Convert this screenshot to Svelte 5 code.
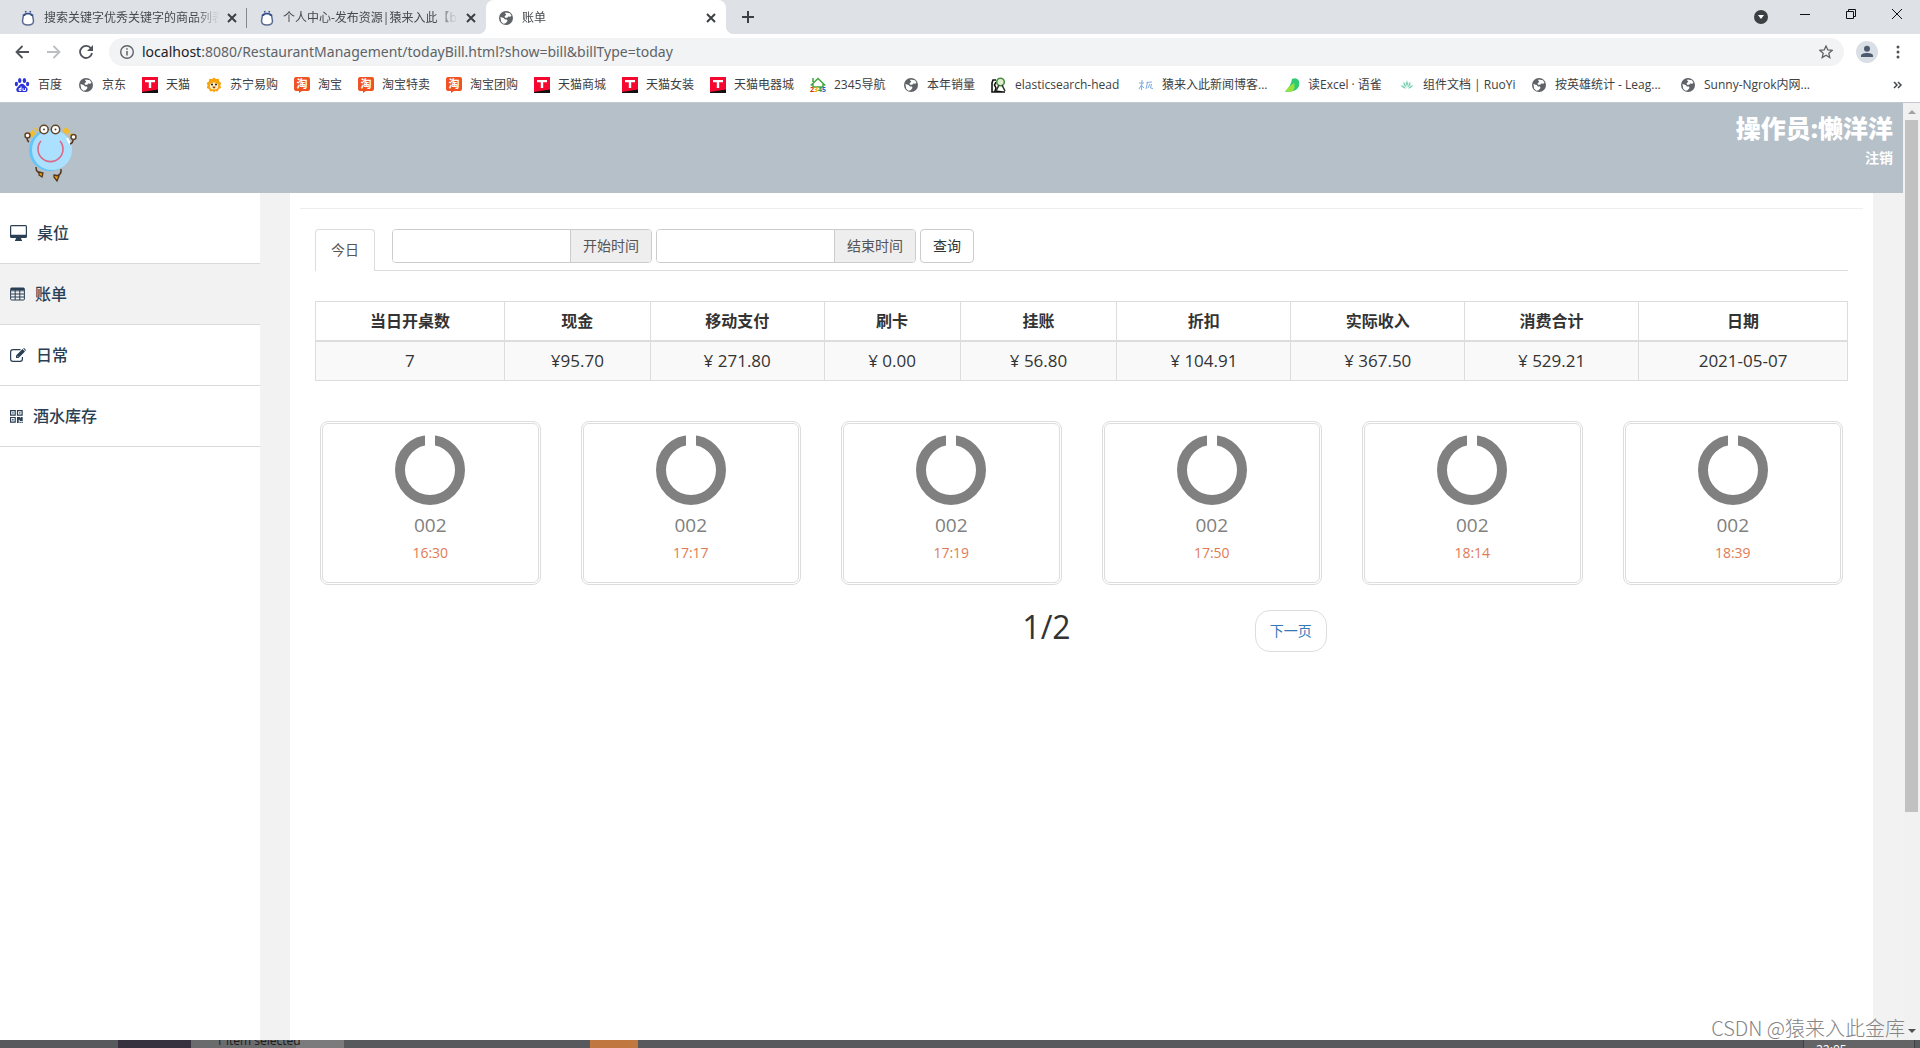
<script lang="ts">
  type Tab = { title: string; icon: string; active?: boolean }
  type Bookmark = { label: string; icon: string; width: number }

  const tabs: Tab[] = [
    { title: '搜索关键字优秀关键字的商品列表', icon: 'penguin' },
    { title: '个人中心-发布资源|猿来入此【bo', icon: 'penguin' },
    { title: '账单', icon: 'globe', active: true },
  ]

  const bookmarks: Bookmark[] = [
    { label: '百度', icon: 'baidu', width: 24 },
    { label: '京东', icon: 'globe', width: 24 },
    { label: '天猫', icon: 'tmall', width: 24 },
    { label: '苏宁易购', icon: 'lion', width: 48 },
    { label: '淘宝', icon: 'taobao', width: 24 },
    { label: '淘宝特卖', icon: 'taobao', width: 48 },
    { label: '淘宝团购', icon: 'taobao', width: 48 },
    { label: '天猫商城', icon: 'tmall', width: 48 },
    { label: '天猫女装', icon: 'tmall', width: 48 },
    { label: '天猫电器城', icon: 'tmall', width: 60 },
    { label: '2345导航', icon: 'house', width: 53 },
    { label: '本年销量', icon: 'globe', width: 48 },
    { label: 'elasticsearch-head', icon: 'elastic', width: 107 },
    { label: '猿来入此新闻博客...', icon: 'blog', width: 106 },
    { label: '读Excel · 语雀', icon: 'leaf', width: 75 },
    { label: '组件文档 | RuoYi', icon: 'lotus', width: 92 },
    { label: '按英雄统计 - Leag...', icon: 'globe', width: 109 },
    { label: 'Sunny-Ngrok内网...', icon: 'globe', width: 112 },
  ]

  const menu = [
    { label: '桌位', icon: 'desktop' },
    { label: '账单', icon: 'table' },
    { label: '日常', icon: 'edit' },
    { label: '酒水库存', icon: 'qrcode' },
  ]

  const columns = [
    { name: '当日开桌数', value: '7', size: 189 },
    { name: '现金', value: '¥95.70', size: 146 },
    { name: '移动支付', value: '¥ 271.80', size: 174 },
    { name: '刷卡', value: '¥ 0.00', size: 136 },
    { name: '挂账', value: '¥ 56.80', size: 157 },
    { name: '折扣', value: '¥ 104.91', size: 174 },
    { name: '实际收入', value: '¥ 367.50', size: 174 },
    { name: '消费合计', value: '¥ 529.21', size: 174 },
    { name: '日期', value: '2021-05-07', size: 209 },
  ]
  const total = columns.reduce((sum, column) => sum + column.size, 0)

  const bills = ['16:30', '17:17', '17:19', '17:50', '18:14', '18:39']

  let current = $state('账单')
  let start = $state('')
  let end = $state('')
</script>

{#snippet favicon(name: string)}
  <svg class="favicon" viewBox="0 0 16 16" aria-hidden="true">
    {#if name === 'globe'}
      <circle cx="8" cy="8" r="7" fill="#5f6368" />
      <path d="M7.500 2.600 12 3.300l1.500 2.400-1.300 1.100-2-.3-.9 1.200-2.200.1-.6-1.400 1-1 .8-1.200-1.200-.4zM2.400 7l3.300.9 1.300 1.500 1.900.2.600 1.300-1.900 2.400-2.100.5-2.300-2.100z" fill="#fff" />
    {:else if name === 'penguin'}
      <path d="M3.500 5h9l1 6q0 4-5.500 4t-5.500-4z" fill="#fff" stroke="#5c6b91" stroke-width="1.500" />
      <path d="M2.800 6C3 1.500 13 1.500 13.200 6z" fill="#34508c" />
      <path d="M6 2.500 5.500 1M10 2.500 10.500 1" stroke="#34508c" stroke-width="1.500" />
      <rect x="5" y="4.500" width="6" height="4" rx="2" fill="#fff" />
    {:else if name === 'baidu'}
      <g fill="#2b32dd">
        <ellipse cx="5.700" cy="3.500" rx="1.700" ry="2.500" />
        <ellipse cx="10.400" cy="3.400" rx="1.700" ry="2.500" />
        <ellipse cx="2.400" cy="7" rx="1.600" ry="2.200" />
        <ellipse cx="13.600" cy="7" rx="1.600" ry="2.200" />
        <path d="M8 6.700c2 0 2.800 2 4.500 3.600 2.400 2.400.6 5-1.500 4.800-2.500-.3-3.500-.3-6 0-2.200.2-3.900-2.400-1.500-4.800C5.200 8.700 6 6.700 8 6.700z" />
      </g>
      <path d="M7 9.500v4H5.200v-2H7M9 11.200v2.300h2.500v-2.300" fill="none" stroke="#fff" />
    {:else if name === 'tmall'}
      <path d="M0 0h16v16H0z" fill="#111" />
      <path d="M0 0h16v12.500L0 15z" fill="#f4082f" />
      <path d="M3 3h10v2.200H9.200V11H6.800V5.200H3z" fill="#fff" />
    {:else if name === 'lion'}
      <path d="M8 .5 10 2l2.700-.2.5 2.600L15.300 6l-1 2.300.8 2.600-2.300 1.100-1.200 2.400-2.400-.5L8 15.500l-1.300-1.600-2.500.5L3 12 .8 10.900l.8-2.600L.7 6l2.200-1.600.4-2.600L6 2z" fill="#f5a40b" />
      <ellipse cx="8" cy="9" rx="4.200" ry="3.500" fill="#fff0c3" />
      <circle cx="6" cy="7.500" r=".9" /><circle cx="10" cy="7.500" r=".9" />
      <path d="M6.500 9.500h3Q9.500 11.500 8 11.500T6.500 9.500z" fill="#a33b12" />
    {:else if name === 'taobao'}
      <path d="M2 0h12q2 0 2 2v10q0 2-2 2H8l-3 2v-2H2q-2 0-2-2V2q0-2 2-2z" fill="#ef5223" />
      <text x="8" y="11" text-anchor="middle" font-size="11" font-weight="700" fill="#fff">淘</text>
    {:else if name === 'house'}
      <path d="M.7 8.500 8 1.500l7.300 7M3 1v4M3 7v3h10V7" fill="none" stroke="#43a53d" stroke-width="1.500" />
      <text x="8" y="15" text-anchor="middle" font-size="7" font-weight="700"><tspan fill="#d52e27">2</tspan><tspan fill="#e5a500">3</tspan><tspan fill="#2b9b3c">4</tspan><tspan fill="#2464c8">5</tspan></text>
    {:else if name === 'elastic'}
      <path d="M5 3H2l-1 3v9h13M5 5 3.500 8 5 11l-1 3 8 1" fill="none" stroke="#111" stroke-width="1.600" />
      <circle cx="9.500" cy="5" r="3.800" fill="#dceecf" stroke="#4f8a45" stroke-width="1.600" />
      <path d="m8 8-3 6m6-6 3 6" stroke="#273d22" stroke-width="1.600" />
    {:else if name === 'blog'}
      <path d="M1 6h5M4 3 3.500 13M3.500 8 1 12M4 9l2 2M8.500 5.500 14 5M9.500 5.500 8 12M12 7l-2 4M13.500 7l-1 4 2.500.5" fill="none" stroke="#7dacdd" />
    {:else if name === 'leaf'}
      <path d="M8 2q5-2 7 2 1 5-2 8-4 3.500-12 2.500Q7 9 8 2z" fill="#2ecb71" />
      <path d="M1 14.500Q5 9 10 6q2 5-2 8.500z" fill="#9be13d" />
    {:else if name === 'lotus'}
      <path d="M8 12Q5 7 8 3q3 4 0 9Q4 10 4 4.500q4 2 4 7.500Q4 12 1 8q5 0 7 4 2-4 7-4-3 4-7 4 0-5.500 4-7.500 0 5.500-4 7.500z" fill="#65c9a8" stroke="#fff" stroke-width=".6" />
    {/if}
  </svg>
{/snippet}

{#snippet menuIcon(name: string)}
  {#if name === 'desktop'}
    <svg width="17" height="16" viewBox="0 0 17 16" aria-hidden="true">
      <path fill-rule="evenodd" d="M1.500 0h14Q17 0 17 1.500v10q0 1.500-1.500 1.500H11l.5 1.700.5.300v1H5v-1l.5-.3L6 13H1.500Q0 13 0 11.500v-10Q0 0 1.500 0zM1.200 1.200v8.600h14.600V1.200z" fill="currentColor" />
    </svg>
  {:else if name === 'table'}
    <svg width="15" height="14" viewBox="0 0 15 14" aria-hidden="true">
      <path d="M.6 2.500V12q0 1 1 1h11.800q1 0 1-1V2q0-1-1-1H1.600q-1 0-1 1zM1 3.800h13M1 7h13M1 10h13M5.200 3v10M9.800 3v10" fill="none" stroke="currentColor" />
      <path d="M1 1h13v2H1z" fill="currentColor" />
    </svg>
  {:else if name === 'edit'}
    <svg width="16" height="14" viewBox="0 0 16 14" aria-hidden="true">
      <path d="M10.500 1.600H3Q.6 1.600.6 4v7Q.6 13.400 3 13.400h7q2.400 0 2.400-2.400V9" fill="none" stroke="currentColor" stroke-width="1.200" />
      <path d="m12.500 1 2.500 2.500-6.500 6.500H6V7.500zM13.200.5l.8-.5 2 2-.6.900z" fill="currentColor" />
      <path d="m7.200 7.800 1 1" stroke="#fff" stroke-width=".8" />
    </svg>
  {:else}
    <svg width="13" height="13" viewBox="0 0 13 13" aria-hidden="true">
      <path d="M.6.6h4.600v4.600H.6zM7.500.6h4.600v4.600H7.500zM.6 7.500h4.600v4.600H.6z" fill="none" stroke="currentColor" stroke-width="1.200" />
      <path d="M2.200 2.200h1.400v1.400H2.200zM9.100 2.200h1.400v1.400H9.100zM2.200 9.100h1.400v1.400H2.200zM7 7h3l1 1.300V7h1.700v4h-3V9.700h-1V13H7zM9.500 11.700h1.300V13H9.500zM11.500 11.700h1.300V13h-1.300z" fill="currentColor" />
    </svg>
  {/if}
{/snippet}

<div class="screen">
  <header class="browser">
    <div class="tab-strip">
      {#each tabs as tab}
        <div class="tab" class:active={tab.active}>
          {@render favicon(tab.icon)}
          <span class="tab-title">{tab.title}</span>
          <button class="close" aria-label="关闭标签页">
            <svg width="10" height="10" viewBox="0 0 10 10"><path d="m1 1 8 8M9 1 1 9" /></svg>
          </button>
        </div>
      {/each}
      <button class="new-tab" aria-label="新标签页">
        <svg width="12" height="12" viewBox="0 0 12 12"><path d="M6 0v12M0 6h12" /></svg>
      </button>
      <div class="window-controls">
        <button class="search-tabs" aria-label="搜索标签页">
          <svg width="14" height="14" viewBox="0 0 14 14"><circle cx="7" cy="7" r="7" fill="#3c4043" /><path d="M4 5h6l-3 4z" fill="#fff" /></svg>
        </button>
        <button aria-label="最小化">
          <svg width="10" height="10" viewBox="0 0 10 10"><path d="M0 5.500h10" stroke="#111" /></svg>
        </button>
        <button aria-label="还原">
          <svg width="10" height="10" viewBox="0 0 10 10"><path d="M.5 2.500h7v7h-7zM2.500 2.500v-2h7v7h-2" fill="none" stroke="#111" /></svg>
        </button>
        <button aria-label="关闭">
          <svg width="10" height="10" viewBox="0 0 10 10"><path d="m0 0 10 10M10 0 0 10" stroke="#111" /></svg>
        </button>
      </div>
    </div>

    <div class="toolbar">
      <button aria-label="后退">
        <svg width="14" height="14" viewBox="0 0 14 14"><path d="M14 7H1.500M7.500 1l-6 6 6 6" fill="none" stroke="#50545a" stroke-width="1.800" /></svg>
      </button>
      <button aria-label="前进">
        <svg width="14" height="14" viewBox="0 0 14 14"><path d="M0 7h12.500M6.500 1l6 6-6 6" fill="none" stroke="#bcbec1" stroke-width="1.800" /></svg>
      </button>
      <button aria-label="重新加载">
        <svg width="14" height="14" viewBox="0 0 14 14"><path d="M12 3.500A6 6 0 1 0 13 8" fill="none" stroke="#50545a" stroke-width="1.800" /><path d="M14 0v6H8z" fill="#50545a" /></svg>
      </button>
      <div class="omnibox">
        <svg width="14" height="14" viewBox="0 0 14 14" aria-hidden="true"><circle cx="7" cy="7" r="6.300" fill="none" stroke="#5f6368" stroke-width="1.400" /><path d="M7 6v4.500M7 3.300v1.500" stroke="#5f6368" stroke-width="1.500" /></svg>
        <span class="url"><b>localhost</b>:8080/RestaurantManagement/todayBill.html?show=bill&amp;billType=today</span>
        <button aria-label="收藏">
          <svg width="14" height="14" viewBox="0 0 14 14"><path d="m7 1 1.800 4 4.300.4-3.300 2.900 1 4.300L7 10.300l-3.800 2.300 1-4.300L.9 5.400 5.200 5z" fill="none" stroke="#5f6368" stroke-width="1.300" /></svg>
        </button>
      </div>
      <button class="profile" aria-label="个人资料">
        <svg width="22" height="22" viewBox="0 0 22 22"><circle cx="11" cy="11" r="11" fill="#dadfe6" /><circle cx="11" cy="7.800" r="3" fill="#4d5b6f" /><path d="M5 16v-1.500c0-3.500 12-3.500 12 0V16z" fill="#4d5b6f" /></svg>
      </button>
      <button aria-label="菜单">
        <svg width="4" height="14" viewBox="0 0 4 14" fill="#50545a"><circle cx="2" cy="2" r="1.500" /><circle cx="2" cy="7" r="1.500" /><circle cx="2" cy="12" r="1.500" /></svg>
      </button>
    </div>

    <nav class="bookmarks">
      {#each bookmarks as bookmark}
        <a href="#{bookmark.label}">
          {@render favicon(bookmark.icon)}
          <span style:width="{bookmark.width}px">{bookmark.label}</span>
        </a>
      {/each}
      <button class="more" aria-label="更多书签">
        <svg width="9" height="8" viewBox="0 0 9 8"><path d="m1 1 3 3-3 3M5 1l3 3-3 3" fill="none" stroke="#44484c" stroke-width="1.500" /></svg>
      </button>
    </nav>
  </header>

  <div class="viewport">
    <div class="page">
      <header class="banner">
        <svg class="logo" width="56" height="60" viewBox="0 0 56 60" aria-hidden="true">
          <path d="m8 12 7-7M42 5l7 6" stroke="#f1bd2d" stroke-width="5" stroke-dasharray="6 2" />
          <circle cx="28" cy="26" r="21" fill="#62c5fa" />
          <circle cx="30" cy="26" r="20" fill="#abe1ff" />
          <path d="M19 17a12.500 12.500 0 1 0 19 0" fill="none" stroke="#db6884" stroke-width="1.600" />
          <g fill="#fff" stroke="#634426" stroke-width="1.500">
            <circle cx="22" cy="5.500" r="4.200" /><circle cx="33.500" cy="5.500" r="4.200" />
            <circle cx="5.500" cy="11.500" r="2.500" /><circle cx="51.500" cy="13" r="2.500" />
          </g>
          <circle cx="22" cy="5.500" r="1" fill="#634426" /><circle cx="33.500" cy="5.500" r="1" fill="#634426" />
          <path d="m45 14 3 6" stroke="#fff" stroke-width="2" />
          <path d="M5 14q0 3 2 4M51 16q0 3-3 4M14 43q0 6 5 6M39 45q1 6-5 7" fill="none" stroke="#55361f" stroke-width="1.500" />
          <path d="m17 48 4 1-1 4-3-2zM32 51l5 1-2 5-3-4z" fill="#e6a116" stroke="#55361f" stroke-width="1.300" />
        </svg>
        <div class="operator">
          <strong>操作员:懒洋洋</strong>
          <a href="#logout">注销</a>
        </div>
      </header>

      <div class="body">
        <nav class="sidebar">
          {#each menu as item}
            <a
              href="#{item.icon}"
              class:selected={current === item.label}
              onclick={() => (current = item.label)}
            >
              {@render menuIcon(item.icon)}
              <span>{item.label}</span>
            </a>
          {/each}
        </nav>

        <main>
          <hr />
          <div class="content">
            <div class="filters">
              <a class="today" href="#today">今日</a>
              <form onsubmit={(event) => event.preventDefault()}>
                <div class="group">
                  <input id="start" type="text" bind:value={start} />
                  <label for="start">开始时间</label>
                </div>
                <div class="group">
                  <input id="end" type="text" bind:value={end} />
                  <label for="end">结束时间</label>
                </div>
                <button class="query">查询</button>
              </form>
            </div>

            <table>
              <colgroup>
                {#each columns as column}
                  <col style:width="{(column.size / total) * 100}%" />
                {/each}
              </colgroup>
              <thead>
                <tr>
                  {#each columns as column}
                    <th>{column.name}</th>
                  {/each}
                </tr>
              </thead>
              <tbody>
                <tr>
                  {#each columns as column}
                    <td>{column.value}</td>
                  {/each}
                </tr>
              </tbody>
            </table>
          </div>

          <div class="bills">
            {#each bills as time}
              <a class="bill" href="#bill-{time}">
                <svg width="70" height="70" viewBox="0 0 70 70" aria-hidden="true">
                  <circle cx="35" cy="35" r="30" fill="none" stroke="#808080" stroke-width="10" />
                  <path d="M30 0h10v12H30z" fill="#fff" />
                </svg>
                <span class="number">002</span>
                <span class="time">{time}</span>
              </a>
            {/each}
          </div>

          <div class="pager">
            <span>1/2</span>
            <a href="#next">下一页</a>
          </div>
        </main>
      </div>
    </div>

    <div class="scrollbar">
      <span class="arrow up"></span>
      <div class="thumb"></div>
      <span class="arrow down"></span>
    </div>
    <div class="watermark">CSDN @猿来入此金库</div>
  </div>

  <footer class="strip">
    <div class="picture"></div>
    <div class="status">1 item selected</div>
    <div class="pale"></div>
    <div class="task"></div>
    <div class="clock">22:05</div>
  </footer>
</div>

<style>
  :global(body) {
    margin: 0;
  }

  .screen,
  .screen * {
    box-sizing: border-box;
  }

  .screen {
    display: flex;
    flex-direction: column;
    height: 100vh;
    overflow: hidden;
    background: #fff;
    color: #333;
    font-family: 'Open Sans', 'Noto Sans CJK SC', sans-serif;
    font-size: 14px;
    line-height: 20px;
  }

  a {
    color: inherit;
    text-decoration: none;
  }

  button {
    display: flex;
    align-items: center;
    justify-content: center;
    padding: 0;
    border: 0;
    background: none;
    color: inherit;
    font: inherit;
  }

  svg {
    flex-shrink: 0;
  }

  .favicon {
    width: 16px;
    height: 16px;
    overflow: visible;
  }

  /* browser chrome */
  .browser {
    flex-shrink: 0;
    border-bottom: 1px solid #c5c8cc;
    font-size: 12px;
  }

  .tab-strip {
    display: flex;
    height: 34px;
    padding-left: 8px;
    background: #dee1e6;
  }

  .tab {
    position: relative;
    display: flex;
    align-items: center;
    width: 239px;
    padding: 1px 10px 0 12px;
    color: #45494d;
  }

  .tab:first-child::after {
    content: '';
    position: absolute;
    right: 0;
    width: 1px;
    height: 20px;
    background: #85898f;
  }

  .tab.active {
    width: 240px;
    border-radius: 8px 8px 0 0;
    background: #fff;
  }

  .tab.active::before,
  .tab.active::after {
    content: '';
    position: absolute;
    bottom: 0;
    width: 8px;
    height: 8px;
  }

  .tab.active::before {
    left: -8px;
    background: radial-gradient(circle at 0 0, transparent 8px, #fff 8px);
  }

  .tab.active::after {
    right: -8px;
    background: radial-gradient(circle at 100% 0, transparent 8px, #fff 8px);
  }

  .tab-title {
    flex: 1;
    margin: 0 8px;
    overflow: hidden;
    white-space: nowrap;
    mask-image: linear-gradient(to left, transparent, #000 24px);
  }

  .close {
    width: 10px;
  }

  .close path,
  .new-tab path {
    stroke: #3c4043;
    stroke-width: 2;
  }

  .new-tab {
    width: 44px;
  }

  .window-controls {
    display: flex;
    gap: 36px;
    height: 28px;
    margin-left: auto;
    padding-right: 18px;
  }

  .search-tabs {
    height: 34px;
    margin-right: -4px;
  }

  .toolbar {
    display: flex;
    align-items: center;
    gap: 18px;
    height: 36px;
    padding: 0 20px 0 15px;
  }

  .omnibox {
    display: flex;
    flex: 1;
    align-items: center;
    gap: 8px;
    height: 28px;
    margin: 0 -6px 0 -2px;
    padding: 0 11px;
    border-radius: 14px;
    background: #f1f3f4;
  }

  .url {
    flex: 1;
    color: #5f6368;
    font-family: 'Noto Sans', sans-serif;
    font-size: 14px;
  }

  .url b {
    color: #202124;
    font-weight: 400;
  }

  .bookmarks {
    display: flex;
    align-items: center;
    gap: 16px;
    height: 32px;
    padding: 0 18px 2px 14px;
    color: #3c4043;
  }

  .bookmarks a {
    display: flex;
    align-items: center;
    gap: 8px;
    white-space: nowrap;
  }

  .more {
    margin-left: auto;
  }

  /* page */
  .viewport {
    position: relative;
    display: flex;
    flex: 1;
    min-height: 0;
  }

  .page {
    display: flex;
    flex: 1;
    flex-direction: column;
    background: #f2f2f2;
  }

  .banner {
    display: flex;
    justify-content: space-between;
    height: 90px;
    padding: 10px 10px 0 22px;
    background: #b5c0c9;
    color: #fff;
  }

  .logo {
    margin-top: 11px;
  }

  .operator {
    display: flex;
    flex-direction: column;
    align-items: flex-end;
    gap: 7px;
    font-weight: 700;
  }

  .operator strong {
    font-size: 25px;
    line-height: 30px;
  }

  .operator a {
    line-height: 16px;
  }

  .body {
    display: flex;
    flex: 1;
    gap: 30px;
    padding-right: 30px;
  }

  .sidebar {
    width: 260px;
    padding-top: 10px;
    background: #fff;
    color: #2a3f54;
    font-size: 16px;
    font-weight: 500;
  }

  .sidebar a {
    display: flex;
    align-items: center;
    gap: 10px;
    height: 61px;
    padding-left: 10px;
    border-bottom: 1px solid #d9d9d9;
  }

  .sidebar .selected {
    background: #f2f2f2;
  }

  main {
    flex: 1;
    padding: 15px 10px 0;
    background: #fff;
  }

  hr {
    height: 1px;
    margin: 0 0 20px;
    border: 0;
    background: #eee;
  }

  .content {
    padding: 0 15px;
  }

  .filters {
    display: flex;
    gap: 17px;
    height: 42px;
    border-bottom: 1px solid #ddd;
  }

  .today {
    width: 60px;
    height: 42px;
    padding-top: 10px;
    border: 1px solid #ddd;
    border-bottom: 0;
    border-radius: 4px 4px 0 0;
    background: #fff;
    color: #555;
    text-align: center;
  }

  form {
    display: flex;
    gap: 4px;
    height: 34px;
  }

  .group {
    display: flex;
    width: 260px;
    border: 1px solid #ccc;
    border-radius: 4px;
    overflow: hidden;
  }

  .group input {
    flex: 1;
    min-width: 0;
    padding: 6px 12px;
    border: 0;
    outline: 0;
    background: #fff;
    font: inherit;
  }

  .group label {
    padding: 6px 12px;
    border-left: 1px solid #ccc;
    background: #eee;
    color: #555;
  }

  .query {
    width: 54px;
    border: 1px solid #ccc;
    border-radius: 4px;
    background: #fff;
  }

  table {
    width: 100%;
    margin-top: 30px;
    border-collapse: collapse;
    table-layout: fixed;
    text-align: center;
  }

  th,
  td {
    height: 40px;
    padding: 0;
    border: 1px solid #ddd;
  }

  th {
    height: 39px;
    border-bottom-width: 2px;
    font-size: 16px;
  }

  td {
    background: #f9f9f9;
    font-size: 17px;
  }

  .bills {
    display: grid;
    grid-template-columns: repeat(6, 1fr);
    gap: 40px;
    padding: 0 20px;
    margin-top: 40px;
  }

  .bill {
    display: flex;
    flex-direction: column;
    align-items: center;
    height: 164px;
    padding-top: 11px;
    border: 3px double #ddd;
    border-radius: 8px;
  }

  .number {
    margin-top: 8px;
    color: #808080;
    font-size: 19px;
    line-height: 24px;
  }

  .time {
    margin-top: 6px;
    color: #e07b56;
  }

  .pager {
    display: flex;
    align-items: flex-start;
    justify-content: center;
    gap: 184px;
    margin-top: 25px;
    padding-left: 186px;
  }

  .pager span {
    font-size: 32px;
    line-height: 34px;
  }

  .pager a {
    padding: 10px 14px;
    border: 1px solid #ddd;
    border-radius: 15px;
    color: #337ab7;
  }

  .scrollbar {
    display: flex;
    flex-direction: column;
    align-items: center;
    width: 17px;
    padding: 7px 0;
    background: #f1f1f1;
  }

  .thumb {
    width: 13px;
    height: 75%;
    margin: 6px 0 auto;
    background: #c1c1c1;
  }

  .arrow {
    border: 4px solid transparent;
  }

  .up {
    border-top: 0;
    border-bottom-color: #a3a3a3;
  }

  .down {
    border-bottom: 0;
    border-top-color: #505050;
  }

  .watermark {
    position: absolute;
    right: 15px;
    bottom: 0;
    color: #858585;
    font-family: 'Noto Sans CJK SC', sans-serif;
    font-size: 20px;
    font-weight: 300;
    line-height: 24px;
  }

  /* sliver of the desktop below the window */
  .strip {
    display: flex;
    flex-shrink: 0;
    height: 8px;
    overflow: hidden;
    background: #58595d;
    font-size: 12px;
  }

  .picture {
    width: 73px;
    margin-left: 118px;
    background: #36303f;
  }

  .status {
    z-index: 1;
    display: flex;
    align-items: flex-end;
    width: 105px;
    padding-left: 25px;
    background: #6a6b6d;
    color: #1c1c1c;
    line-height: 14px;
    white-space: nowrap;
  }

  .pale {
    width: 48px;
    background: #7b7b7e;
  }

  .task {
    width: 48px;
    margin-left: 246px;
    background: #c07840;
  }

  .clock {
    width: 112px;
    margin: 0 5px 0 auto;
    padding-left: 12px;
    border: solid #3e3f42;
    border-width: 0 1px;
    background: #646467;
    color: #fff;
  }
</style>
